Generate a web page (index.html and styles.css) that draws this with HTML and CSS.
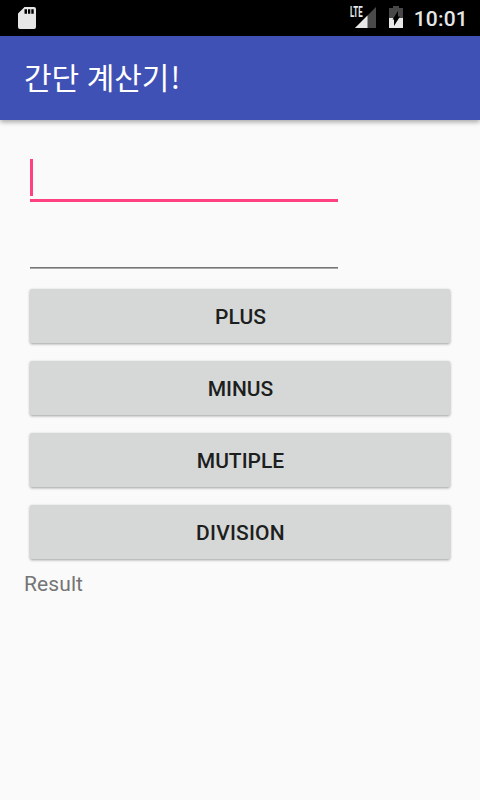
FILE: index.html
```html
<!DOCTYPE html>
<html lang="ko">
<head>
<meta charset="utf-8">
<title>간단 계산기!</title>
<link rel="stylesheet" href="styles.css">
</head>
<body>
<div class="status-bar">
  <svg class="sd" width="18" height="22" viewBox="0 0 18 22"><path fill="#e6e6e6" fill-rule="evenodd" d="M6.5 0H16Q18 0 18 2V20Q18 22 16 22H2Q0 22 0 20V6.5ZM6.5 2.3V6.8H9V2.3ZM10 2.3V6.8H12.3V2.3ZM13.3 2.3V6.8H15.7V2.3Z"/></svg>
  <div class="signal">
    <span class="lte">LTE</span>
    <svg width="22" height="22" viewBox="0 0 22 22"><path fill="#4a4a4a" d="M22 0V21H1Z"/><path fill="#e8e8e8" d="M13.5 8.5V21H1Z"/></svg>
  </div>
  <svg class="battery" width="14" height="22" viewBox="0 0 14 22"><path fill="#484848" d="M4 0H10V2H14V12H0V2H4Z"/><path fill="#e8e8e8" d="M0 12H14V22H0Z"/><path fill="#000" d="M9 5V10.5H11L5 20V13.5H3.5Z"/></svg>
  <span class="clock">10:01</span>
</div>
<header class="app-bar"><h1>간단 계산기<span class="mark">!</span></h1></header>
<main>
  <div class="field focused"><span class="caret"></span></div>
  <div class="field"></div>
  <div class="buttons">
    <button>PLUS</button>
    <button>MINUS</button>
    <button>MUTIPLE</button>
    <button class="wide">DIVISION</button>
  </div>
  <p class="result">Result</p>
</main>
</body>
</html>
```
FILE: styles.css
```css
* { box-sizing: border-box; }
body {
  margin: 0;
  height: 800px;
  overflow: hidden;
  background: #fafafa;
  font-family: Roboto, "Noto Sans CJK KR", sans-serif;
}
.status-bar {
  height: 36px;
  padding: 0 12px 0 18px;
  display: flex;
  align-items: center;
  background: #000;
  color: #e6e6e6;
}
.sd { margin-right: auto; }
.signal {
  position: relative;
  display: flex;
  margin-right: 13px;
}
.lte {
  position: absolute;
  left: -4px;
  top: -2px;
  font-size: 14px;
  line-height: 14px;
  font-weight: 700;
  transform: scaleX(.56);
  transform-origin: left;
}
.battery { margin: -2px 11px 0 0; }
.clock {
  font-size: 21px;
  font-weight: 500;
  line-height: 36px;
  letter-spacing: .2px;
  padding-top: 1px;
}
.app-bar {
  height: 84px;
  padding: 0 0 2px 24px;
  display: flex;
  align-items: center;
  background: #3f51b5;
  box-shadow: 0 2px 5px rgba(0, 0, 0, .35);
}
h1 {
  margin: 0;
  color: #fff;
  font-size: 30px;
  font-weight: 400;
  line-height: 40px;
}
.mark {
  margin-left: 1px;
  font-family: "Noto Sans CJK KR", sans-serif;
}
main { padding: 24px 24px 0; }
.field {
  width: 308px;
  height: 53px;
  margin: 0 6px 14px;
  border-bottom: 1px solid #757575;
  box-shadow: 0 1px #a9a9a9;
}
.field.focused {
  height: 58px;
  margin-bottom: 13px;
  padding-top: 15px;
  border-bottom: 3px solid #ff4081;
  box-shadow: none;
}
.caret {
  display: block;
  width: 3px;
  height: 37px;
  background: #ff4081;
}
.buttons {
  display: flex;
  flex-direction: column;
  gap: 18px;
  margin: 21px 6px 0;
}
button {
  height: 54px;
  padding: 2px 0 0 1px;
  border: 0;
  border-radius: 2px;
  background: #d6d8d7;
  color: #1d1e1e;
  font: 500 21px/52px Roboto, sans-serif;
  box-shadow: 0 1px 3px rgba(0, 0, 0, .38);
}
.wide { letter-spacing: .2px; }
.result {
  margin: 13px 0 0;
  color: #757575;
  font-size: 21px;
  line-height: 25px;
  letter-spacing: .1px;
}
```
